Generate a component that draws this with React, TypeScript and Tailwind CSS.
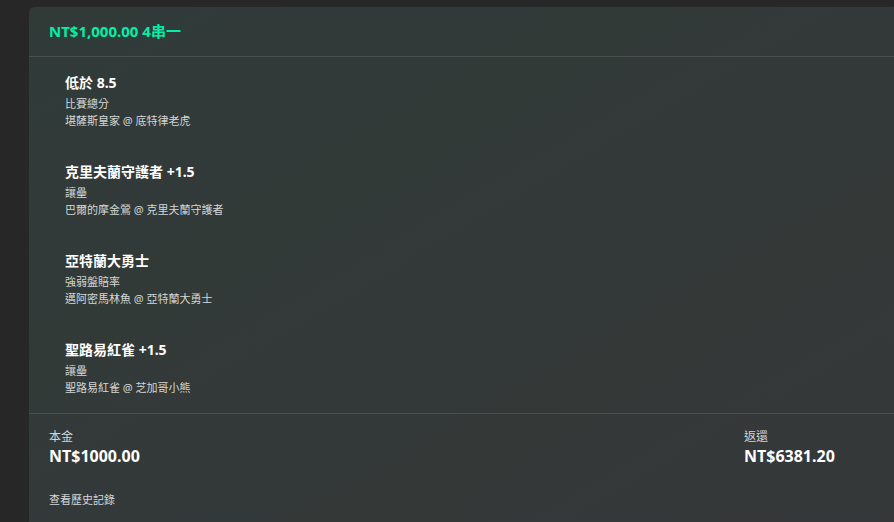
import React from "react";

const legs = [
  { pick: "低於 8.5", market: "比賽總分", match: "堪薩斯皇家 @ 底特律老虎" },
  { pick: "克里夫蘭守護者 +1.5", market: "讓壘", match: "巴爾的摩金鶯 @ 克里夫蘭守護者" },
  { pick: "亞特蘭大勇士", market: "強弱盤賠率", match: "邁阿密馬林魚 @ 亞特蘭大勇士" },
  { pick: "聖路易紅雀 +1.5", market: "讓壘", match: "聖路易紅雀 @ 芝加哥小熊" },
];

export default function App() {
  return (
    <div
      className="w-[894px] h-[522px] overflow-hidden bg-[#272727] pt-[7px] pl-[29px]"
      style={{ fontFamily: '"Segoe UI", "Noto Sans", "Noto Sans CJK TC", sans-serif' }}
    >
      <div className="w-[900px] h-[530px] rounded-tl-md bg-gradient-to-br from-[#303b38] to-[#363838] text-white">
        {/* header */}
        <div className="h-[50px] px-5 flex items-center border-b border-[#4a4f4d]">
          <span className="text-[15px] font-bold text-[#00f0a8]">NT$1,000.00 4串一</span>
        </div>

        {/* legs */}
        <div className="pl-9 pt-[16px] pb-[17px] flex flex-col gap-[33px] border-b border-[#4a4f4d]">
          {legs.map((leg) => (
            <div key={leg.match}>
              <div className="text-[14px] leading-[20px] font-bold">{leg.pick}</div>
              <div className="mt-[2px] text-[11px] leading-[17px] text-[#d4d7d6]">{leg.market}</div>
              <div className="text-[11px] leading-[17px] text-[#d4d7d6]">{leg.match}</div>
            </div>
          ))}
        </div>

        {/* footer */}
        <div className="px-5 pt-[14px]">
          <div className="flex">
            <div className="w-[695px]">
              <div className="text-[12px] leading-[17px] text-[#d4d7d6]">本金</div>
              <div className="mt-[1px] text-[16px] leading-[20px] font-bold">NT$1000.00</div>
            </div>
            <div>
              <div className="text-[12px] leading-[17px] text-[#d4d7d6]">返還</div>
              <div className="mt-[1px] text-[16px] leading-[20px] font-bold">NT$6381.20</div>
            </div>
          </div>
          <div className="mt-[25px] text-[11px] leading-[17px] text-[#d4d7d6]">查看歷史記錄</div>
        </div>
      </div>
    </div>
  );
}
